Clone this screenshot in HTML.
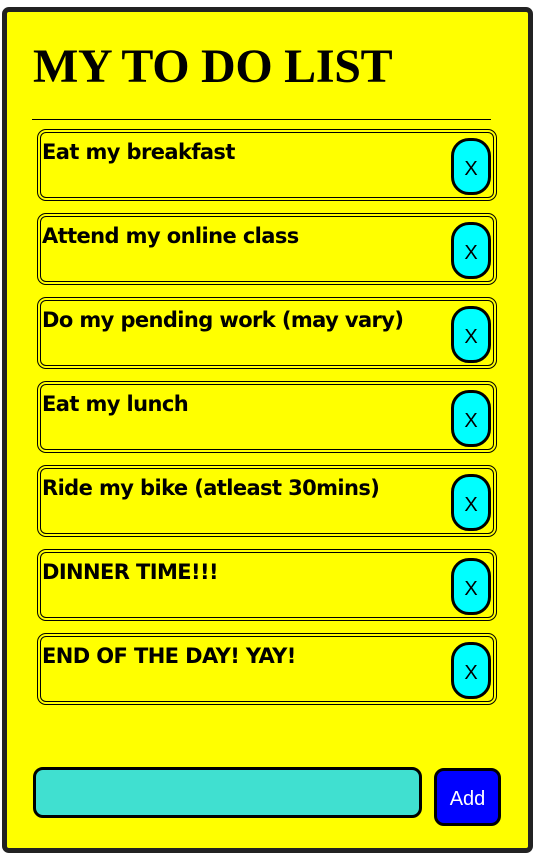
<!DOCTYPE html>
<html><head><style>
body{margin:0;background:#fff;width:535px;height:855px;position:relative;overflow:hidden}
.box{position:absolute;left:2px;top:7px;width:521px;height:836px;background:#ff0;border:5px solid #222;border-radius:7px}
h1{position:absolute;left:33px;top:39px;margin:0;font:bold 48px "Liberation Serif",serif;color:#000;letter-spacing:-0.3px}
.hr{position:absolute;left:32px;top:119px;width:459px;height:1px;background:#000}
.item{position:absolute;left:37px;width:452px;height:64px;border:4px double #000;border-radius:9px}
.item span{position:absolute;left:1px;top:7px;font:bold 21px "DejaVu Sans","Liberation Sans",sans-serif;letter-spacing:-0.6px;color:#000}
.x{position:absolute;left:410px;top:5px;width:34px;height:51px;background:#0ff;border:3px solid #000;border-radius:18px;font:20px "Liberation Sans",sans-serif;text-align:center;line-height:56px}
.inp{position:absolute;left:33px;top:767px;width:383px;height:45px;background:#40e0d0;border:3px solid #000;border-radius:10px}
.add{position:absolute;left:434px;top:768px;width:61px;height:52px;background:#00f;border:3px solid #000;border-radius:10px;color:#fff;font:20px "Liberation Sans",sans-serif;text-align:center;line-height:56px}
</style></head><body>
<div class="box"></div>
<h1>MY TO DO LIST</h1>
<div class="hr"></div>
<div class="item" style="top:129px"><span>Eat my breakfast</span><div class="x">X</div></div>
<div class="item" style="top:213px"><span>Attend my online class</span><div class="x">X</div></div>
<div class="item" style="top:297px"><span>Do my pending work (may vary)</span><div class="x">X</div></div>
<div class="item" style="top:381px"><span>Eat my lunch</span><div class="x">X</div></div>
<div class="item" style="top:465px"><span>Ride my bike (atleast 30mins)</span><div class="x">X</div></div>
<div class="item" style="top:549px"><span>DINNER TIME!!!</span><div class="x">X</div></div>
<div class="item" style="top:633px"><span>END OF THE DAY! YAY!</span><div class="x">X</div></div>
<div class="inp"></div>
<div class="add">Add</div>
</body></html>
